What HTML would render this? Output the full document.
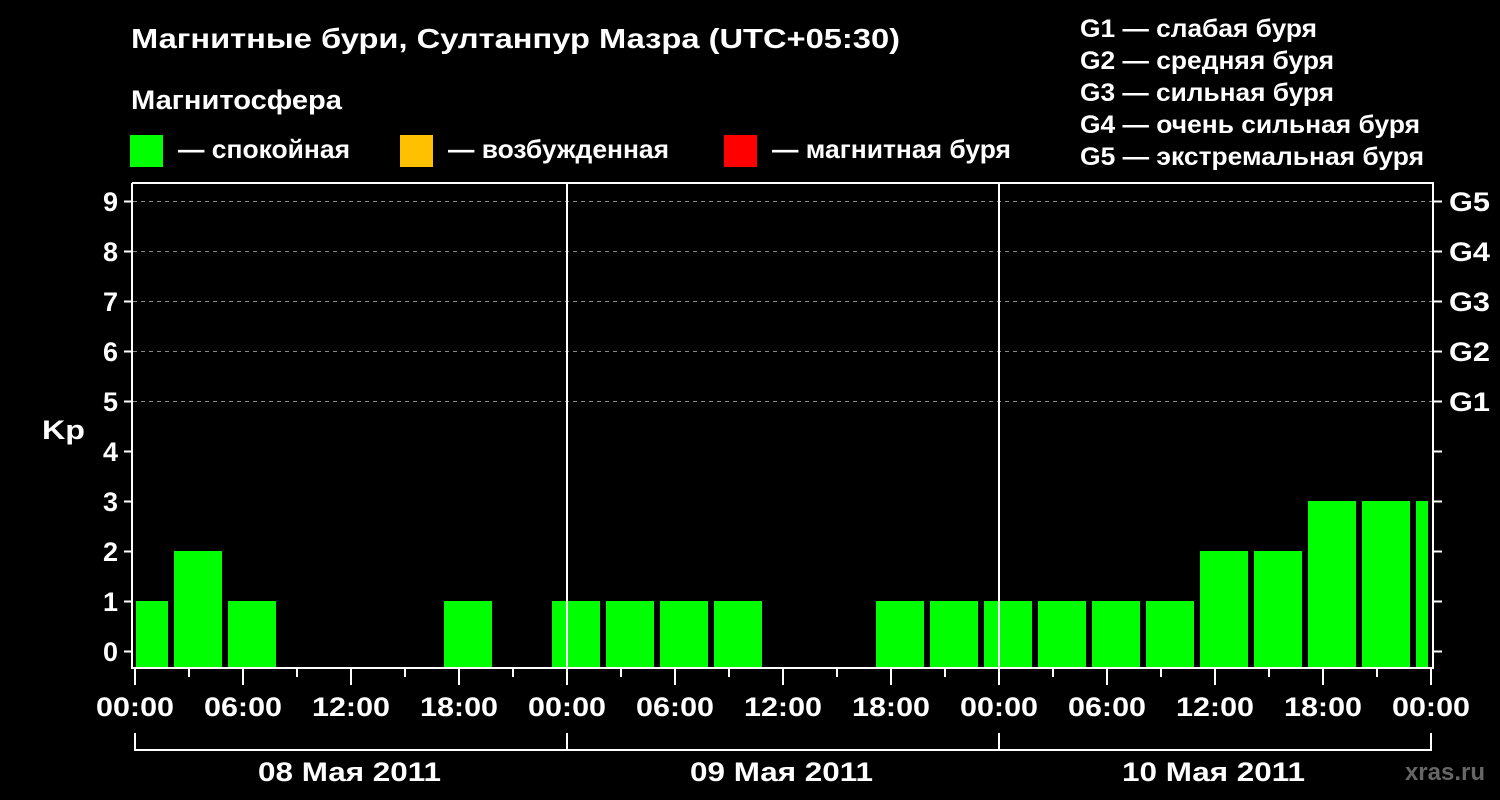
<!DOCTYPE html><html><head><style>body{margin:0;background:#000}svg{display:block}text{font-family:"Liberation Sans",sans-serif;font-weight:bold;fill:#fff}</style></head><body>
<svg width="1500" height="800" viewBox="0 0 1500 800">
<rect width="1500" height="800" fill="#000"/>
<text x="131" y="48" font-size="28" textLength="769" lengthAdjust="spacingAndGlyphs">Магнитные бури, Султанпур Мазра (UTC+05:30)</text>
<text x="131" y="109" font-size="27" textLength="211" lengthAdjust="spacingAndGlyphs">Магнитосфера</text>
<rect x="130" y="135" width="33" height="32" fill="#00ff00"/><text x="178" y="158" font-size="26" textLength="172" lengthAdjust="spacingAndGlyphs">— спокойная</text>
<rect x="400" y="135" width="33" height="32" fill="#ffc000"/><text x="448" y="158" font-size="26" textLength="221" lengthAdjust="spacingAndGlyphs">— возбужденная</text>
<rect x="724" y="135" width="33" height="32" fill="#ff0000"/><text x="772" y="158" font-size="26" textLength="239" lengthAdjust="spacingAndGlyphs">— магнитная буря</text>
<g font-size="25"><text x="1080" y="37" textLength="237" lengthAdjust="spacingAndGlyphs">G1 — слабая буря</text><text x="1080" y="69" textLength="254" lengthAdjust="spacingAndGlyphs">G2 — средняя буря</text><text x="1080" y="101" textLength="254" lengthAdjust="spacingAndGlyphs">G3 — сильная буря</text><text x="1080" y="133" textLength="340" lengthAdjust="spacingAndGlyphs">G4 — очень сильная буря</text><text x="1080" y="165" textLength="344" lengthAdjust="spacingAndGlyphs">G5 — экстремальная буря</text></g>
<g stroke="#888" stroke-dasharray="4,4" stroke-width="1"><line x1="133" x2="1432" y1="201.5" y2="201.5"/><line x1="133" x2="1432" y1="251.5" y2="251.5"/><line x1="133" x2="1432" y1="301.5" y2="301.5"/><line x1="133" x2="1432" y1="351.5" y2="351.5"/><line x1="133" x2="1432" y1="401.5" y2="401.5"/></g>
<g fill="#00ff00">
<rect x="136" y="601" width="32" height="67"/><rect x="174" y="551" width="48" height="117"/><rect x="228" y="601" width="48" height="67"/>
<rect x="444" y="601" width="48" height="67"/><rect x="552" y="601" width="48" height="67"/><rect x="606" y="601" width="48" height="67"/><rect x="660" y="601" width="48" height="67"/><rect x="714" y="601" width="48" height="67"/>
<rect x="876" y="601" width="48" height="67"/><rect x="930" y="601" width="48" height="67"/><rect x="984" y="601" width="48" height="67"/><rect x="1038" y="601" width="48" height="67"/><rect x="1092" y="601" width="48" height="67"/><rect x="1146" y="601" width="48" height="67"/>
<rect x="1200" y="551" width="48" height="117"/><rect x="1254" y="551" width="48" height="117"/><rect x="1308" y="501" width="48" height="167"/><rect x="1362" y="501" width="48" height="167"/><rect x="1416" y="501" width="12" height="167"/>
</g>
<g stroke="#fff" stroke-width="2" fill="none">
<path d="M132 183V668H1433V183H132"/>
<line x1="567" y1="183" x2="567" y2="668"/><line x1="999" y1="183" x2="999" y2="668"/>
<path d="M124 201.5h8M124 251.5h8M124 301.5h8M124 351.5h8M124 401.5h8M124 451.5h8M124 501.5h8M124 551.5h8M124 601.5h8M124 651.5h8"/>
<path d="M1433 201.5h9M1433 251.5h9M1433 301.5h9M1433 351.5h9M1433 401.5h9M1433 451.5h9M1433 501.5h9M1433 551.5h9M1433 601.5h9M1433 651.5h9"/>
<path d="M135 668v17M243 668v17M351 668v17M459 668v17M567 668v17M675 668v17M783 668v17M891 668v17M999 668v17M1107 668v17M1215 668v17M1323 668v17M1431 668v17"/>
<path d="M189 668v9M297 668v9M405 668v9M513 668v9M621 668v9M729 668v9M837 668v9M945 668v9M1053 668v9M1161 668v9M1269 668v9M1377 668v9"/>
<path d="M135 733v17H1431V733M567 733v17M999 733v17"/>
</g>
<g font-size="27" text-anchor="end"><text x="118" y="211">9</text><text x="118" y="261">8</text><text x="118" y="311">7</text><text x="118" y="361">6</text><text x="118" y="411">5</text><text x="118" y="461">4</text><text x="118" y="511">3</text><text x="118" y="561">2</text><text x="118" y="611">1</text><text x="118" y="661">0</text></g>
<text x="42" y="439" font-size="27" textLength="43" lengthAdjust="spacingAndGlyphs">Kp</text>
<g font-size="27"><text x="1449" y="211" textLength="41" lengthAdjust="spacingAndGlyphs">G5</text><text x="1449" y="261" textLength="41" lengthAdjust="spacingAndGlyphs">G4</text><text x="1449" y="311" textLength="41" lengthAdjust="spacingAndGlyphs">G3</text><text x="1449" y="361" textLength="41" lengthAdjust="spacingAndGlyphs">G2</text><text x="1449" y="411" textLength="41" lengthAdjust="spacingAndGlyphs">G1</text></g>
<g font-size="27">
<text x="96" y="716" textLength="78" lengthAdjust="spacingAndGlyphs">00:00</text><text x="204" y="716" textLength="78" lengthAdjust="spacingAndGlyphs">06:00</text><text x="312" y="716" textLength="78" lengthAdjust="spacingAndGlyphs">12:00</text><text x="420" y="716" textLength="78" lengthAdjust="spacingAndGlyphs">18:00</text><text x="528" y="716" textLength="78" lengthAdjust="spacingAndGlyphs">00:00</text><text x="636" y="716" textLength="78" lengthAdjust="spacingAndGlyphs">06:00</text><text x="744" y="716" textLength="78" lengthAdjust="spacingAndGlyphs">12:00</text><text x="852" y="716" textLength="78" lengthAdjust="spacingAndGlyphs">18:00</text><text x="960" y="716" textLength="78" lengthAdjust="spacingAndGlyphs">00:00</text><text x="1068" y="716" textLength="78" lengthAdjust="spacingAndGlyphs">06:00</text><text x="1176" y="716" textLength="78" lengthAdjust="spacingAndGlyphs">12:00</text><text x="1284" y="716" textLength="78" lengthAdjust="spacingAndGlyphs">18:00</text><text x="1392" y="716" textLength="78" lengthAdjust="spacingAndGlyphs">00:00</text>
<text x="258" y="781" textLength="183" lengthAdjust="spacingAndGlyphs">08 Мая 2011</text><text x="690" y="781" textLength="183" lengthAdjust="spacingAndGlyphs">09 Мая 2011</text><text x="1122" y="781" textLength="183" lengthAdjust="spacingAndGlyphs">10 Мая 2011</text></g>
<text x="1485" y="780" font-size="24" text-anchor="end" style="fill:#666">xras.ru</text>
</svg></body></html>
